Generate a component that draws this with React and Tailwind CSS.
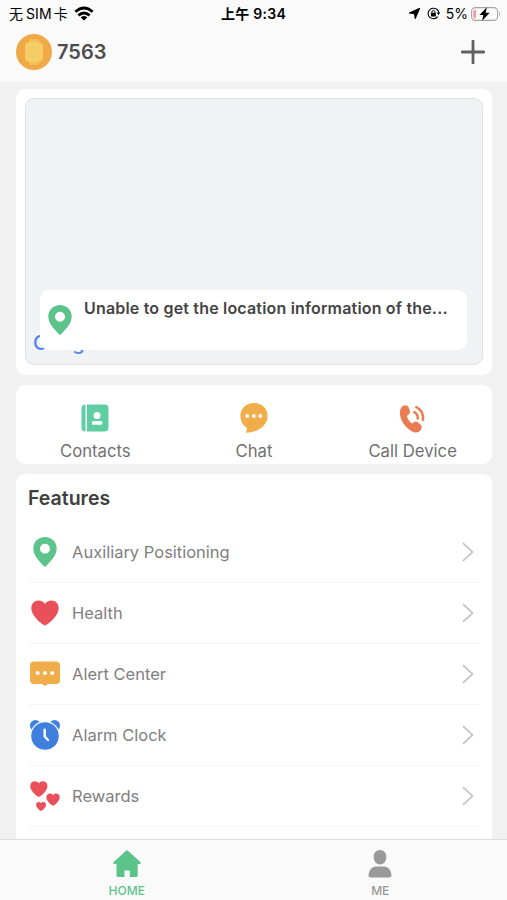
import { useState } from 'react'

function PinIcon({ className }) {
  return (
    <svg viewBox="0 0 24 30" className={className}>
      <path
        fillRule="evenodd"
        fill="#5cc48a"
        d="M12 0C5.4 0 .3 5 .3 11.500C.3 18.500 6 23.800 10.700 29.100Q12 30.500 13.300 29.100C18 23.800 23.700 18.500 23.700 11.500C23.700 5 18.600 0 12 0ZM12 6.800a5 5 0 1 1 0 10a5 5 0 0 1 0-10Z"
      />
    </svg>
  )
}

const HEART = 'M14 25.500C11 24.500 .3 16 .3 8C.3 3.500 3.600.5 7.500.5C10.400.5 12.800 1.900 14 3.900C15.200 1.900 17.600.5 20.500.5C24.400.5 27.700 3.500 27.700 8C27.700 16 17 24.500 14 25.500Z'

function HeartIcon() {
  return (
    <svg viewBox="0 0 28 26" className="w-7 h-[26px]">
      <path d={HEART} fill="#e9505a" />
    </svg>
  )
}

function AlertIcon() {
  return (
    <svg viewBox="0 0 30 26" className="w-[30px] h-[26px]">
      <path d="M4 .5H26Q30 .5 30 4.500V19Q30 23 26 23H18L16 24.500Q15 25 14 24.500L12 23H4Q0 23 0 19V4.500Q0 .5 4 .5Z" fill="#f0ad4a" />
      <circle cx="7.700" cy="12" r="2.100" fill="#fff" />
      <circle cx="15" cy="12" r="2.100" fill="#fff" />
      <circle cx="22.300" cy="12" r="2.100" fill="#fff" />
    </svg>
  )
}

function AlarmIcon() {
  return (
    <svg viewBox="0 0 30 30" className="w-[30px] h-[30px]">
      <circle cx="5.500" cy="5.500" r="5.500" fill="#3f80df" />
      <circle cx="24.500" cy="5.500" r="5.500" fill="#3f80df" />
      <circle cx="15" cy="16" r="15" fill="#fff" />
      <circle cx="15" cy="16" r="13.800" fill="#3f80df" />
      <path d="M14.700 9.800V16.500L18 20" fill="none" stroke="#fff" strokeWidth="2.400" strokeLinecap="round" strokeLinejoin="round" />
    </svg>
  )
}

function RewardsIcon() {
  return (
    <svg viewBox="0 0 30 30" className="w-[30px] h-[30px]" fill="#e9505a">
      <path d={HEART} transform="translate(0 0) scale(.63)" />
      <path d={HEART} transform="translate(16.200 12.300) scale(.49)" />
      <path d={HEART} transform="translate(6 20.800) scale(.36)" />
    </svg>
  )
}

function ContactsIcon() {
  return (
    <svg viewBox="0 0 28 28" className="w-7 h-7">
      <path d="M4.500.5V27.500Q.5 27.500 .5 23.500V4.500Q.5.5 4.500.5Z" fill="#5fcfa3" />
      <path d="M6 .5H23.500Q27.500.5 27.500 4.500V23.500Q27.500 27.500 23.500 27.500H6Z" fill="#5fcfa3" />
      <circle cx="16" cy="11.600" r="3.500" fill="#fff" />
      <rect x="10.800" y="17" width="10.700" height="3.800" rx="1.900" fill="#fff" />
    </svg>
  )
}

function ChatIcon() {
  return (
    <svg viewBox="0 0 28 30" className="w-7 h-[30px]">
      <path d="M14 0C6 0 .4 5.500.4 13C.4 18.500 3 22.500 7 24.800L6 29.800C15 30 27.600 24 27.600 13C27.600 5.500 22 0 14 0Z" fill="#f0ad4a" />
      <circle cx="7.200" cy="13" r="2" fill="#fff" />
      <circle cx="13.700" cy="13" r="2" fill="#fff" />
      <circle cx="20.200" cy="13" r="2" fill="#fff" />
    </svg>
  )
}

function CallIcon() {
  return (
    <svg viewBox="0 0 28 30" className="w-7 h-[30px]">
      <path
        d="M3.800 3Q7.500.8 9.700 4.300L10.900 8Q11.300 10.400 9.300 11.800Q7.500 13 8.200 14.200C9.300 17 10.800 18.900 12.600 20.300Q13.600 20.800 14.700 19.300Q16.300 17.800 18.300 19L21.600 21.600Q23.600 24 21.800 27Q18.800 30.800 14.300 29C6.500 25.500 1.300 17.500 .8 10Q1 5 3.800 3Z"
        fill="#ea7b52"
      />
      <path d="M15.300 9.200Q19.200 11.300 18.700 15.600M17.300 4Q25 8.200 24 17" fill="none" stroke="#ea7b52" strokeWidth="2.500" strokeLinecap="round" />
    </svg>
  )
}

function StatusBar() {
  return (
    <div className="flex h-[27px] items-center justify-between pl-[9px] pr-[6px] text-black">
      <div className="flex w-[180px] items-center text-[14px] whitespace-nowrap">
        <span>无</span>
        <span className="ml-[3px] tracking-[0.1px]">SIM</span>
        <span className="ml-[2px]">卡</span>
        <svg viewBox="0 0 20 15" className="ml-[6px] w-5 h-[15px]" fill="none" stroke="#000" strokeWidth="2.900">
          <path d="M1.400 5.800Q10-2 18.600 5.800" />
          <path d="M4.400 9.300Q10 4.500 15.600 9.300" />
          <path d="M10 14.500L6.700 11.400Q10 8.800 13.300 11.400Z" fill="#000" stroke="none" />
        </svg>
      </div>
      <span className="mr-[3px] text-[14px] font-semibold whitespace-nowrap tracking-[0.25px]">上午 9:34</span>
      <div className="flex w-[180px] items-center justify-end text-[14px]">
        <svg viewBox="0 0 12 12" className="mr-[7px] w-[11px] h-[11px]">
          <path d="M11.600.3L6.800 11.500L6 6.200L.4 5.500Z" fill="#000" stroke="#000" strokeWidth="1.100" strokeLinejoin="round" />
        </svg>
        <svg viewBox="0 0 14 14" className="mr-[6px] w-[13px] h-[13px]">
          <path d="M11.500 3.700A5.700 5.700 0 1 0 11.500 10.300M12.700 7.500A5.700 5.700 0 0 0 9 1.600" fill="none" stroke="#000" strokeWidth="1.200" />
          <path d="M10.400 6H14L12.300 9Z" />
          <rect x="4.300" y="6.200" width="5.200" height="4" rx=".6" />
          <path d="M5.300 6.500V5.300a1.600 1.600 0 0 1 3.200 0V6.500" fill="none" stroke="#000" />
        </svg>
        <span>5%</span>
        <svg viewBox="0 0 30 14" className="ml-[3px] w-[30px] h-[14px]">
          <rect x=".6" y=".6" width="26" height="12.800" rx="3.800" fill="none" stroke="#a5a5a5" strokeWidth="1.100" />
          <path d="M28 4.800Q30 7 28 9.200Z" fill="#a5a5a5" />
          <path d="M5 2.500V11.500Q2.200 11.500 2.200 9V5Q2.200 2.500 5 2.500Z" fill="#f39aa4" />
          <path d="M15.800.3L8.500 8H12.300L11.200 13.700L18.700 5.800H14.700Z" fill="#000" />
        </svg>
      </div>
    </div>
  )
}

const actions = [
  { label: 'Contacts', Icon: ContactsIcon },
  { label: 'Chat', Icon: ChatIcon },
  { label: 'Call Device', Icon: CallIcon },
]

const features = [
  { label: 'Auxiliary Positioning', icon: <PinIcon className="w-6 h-[30px]" /> },
  { label: 'Health', icon: <HeartIcon /> },
  { label: 'Alert Center', icon: <AlertIcon /> },
  { label: 'Alarm Clock', icon: <AlarmIcon /> },
  { label: 'Rewards', icon: <RewardsIcon /> },
]

function FeatureRow({ label, icon }) {
  return (
    <button className="flex h-[61px] w-full shrink-0 items-center border-b border-[#f5f5f5] pr-[6px] text-left">
      <span className="flex w-[34px] justify-center">{icon}</span>
      <span className="ml-[10px] flex-1 text-[16.5px] text-[#808080]">{label}</span>
      <svg viewBox="0 0 12 20" className="w-3 h-5">
        <path d="M1 1.200L10.500 10L1 18.800" fill="none" stroke="#c2c2c2" strokeWidth="1.700" />
      </svg>
    </button>
  )
}

export default function App() {
  const [tab, setTab] = useState('home')

  return (
    <div className="flex h-[900px] w-[507px] flex-col overflow-hidden bg-[#f1f1f1] font-['Inter','Noto_Sans_CJK_SC',sans-serif]">
      <header className="h-[82px] shrink-0 bg-[#fafafa]">
        <StatusBar />
        <div className="flex h-[50px] items-center pl-4 pr-[22px]">
          <svg viewBox="0 0 36 36" className="w-9 h-9">
            <circle cx="18" cy="18" r="18" fill="#f0a947" />
            <path d="M14 5H22L24 9H12ZM12 27H24L22 31H14Z" fill="#f3c05a" />
            <rect x="9" y="8.500" width="18" height="19" rx="4" fill="#f5cc66" />
          </svg>
          <span className="ml-[5px] flex-1 text-[20px] font-semibold text-[#4c4c4c]">7563</span>
          <svg viewBox="0 0 24 24" className="w-6 h-6">
            <path d="M12 1.200V22.800M1.200 12H22.800" stroke="#606060" strokeWidth="2.800" strokeLinecap="round" />
          </svg>
        </div>
      </header>

      <main className="flex min-h-0 flex-1 flex-col gap-[10px] overflow-hidden pt-[7px] pl-4 pr-[15px]">
        {/* Map */}
        <section className="h-[286px] shrink-0 rounded-[9px] bg-white p-[9px]">
          <div className="relative h-[267px] rounded-[9px] border-[1.5px] border-[#dfe1e2] bg-[#f0f2f4]">
            <div className="absolute left-[7px] top-[230px] text-[20px] leading-[28px] font-medium">
              <span className="text-[#4d84ec]">G</span>
              <span className="text-[#f0f2f4]">oo</span>
              <span className="text-[#4d84ec]">g</span>
              <span className="text-[#f0f2f4]">le</span>
            </div>
            <div className="absolute left-[14px] top-[191px] flex h-[60px] w-[427px] rounded-[9px] bg-white pl-2">
              <PinIcon className="mt-[15px] w-6 h-[30px]" />
              <p className="ml-3 mt-[6px] text-[16px] leading-6 font-semibold tracking-[0.18px] whitespace-nowrap text-[#444]">
                Unable to get the location information of the...
              </p>
            </div>
          </div>
        </section>

        {/* Quick actions */}
        <section className="grid h-[79px] shrink-0 grid-cols-3 rounded-[9px] bg-white">
          {actions.map(({ label, Icon }) => (
            <button key={label} className="flex flex-col items-center pt-[17px]">
              <span className="flex h-[31px] items-center"><Icon /></span>
              <span className="mt-[6px] text-[16.7px] leading-6 text-[#707070]">{label}</span>
            </button>
          ))}
        </section>

        {/* Features */}
        <section className="flex min-h-0 flex-1 flex-col overflow-hidden rounded-t-[9px] bg-white px-3">
          <h2 className="h-[48px] shrink-0 text-[19.5px] leading-[49px] font-semibold text-[#404040]">Features</h2>
          {features.map(f => <FeatureRow key={f.label} {...f} />)}
        </section>
      </main>

      {/* Tab bar */}
      <nav className="grid h-[61px] shrink-0 grid-cols-2 border-t-[1.5px] border-[#dedede] bg-[#fafafa] text-[12px] font-medium">
        <button onClick={() => setTab('home')} className="flex flex-col items-center pt-[10px]">
          <svg viewBox="0 0 28 28" className={`w-7 h-7 ${tab === 'home' ? 'text-[#5cc48a]' : 'text-[#999]'}`}>
            <path d="M13 .7Q14 0 15 .7L27.300 12Q28.500 13.800 27 14H24.700V25.500Q24.700 27 23.200 27H16.800V20.500H11.500V27H5Q3.500 27 3.500 25.500V14H1Q-.5 13.800.7 12Z" fill="currentColor" />
          </svg>
          <span className={`mt-[5px] leading-4 ${tab === 'home' ? 'text-[#5cc48a]' : 'text-[#999]'}`}>HOME</span>
        </button>
        <button onClick={() => setTab('me')} className="flex flex-col items-center pt-[10px]">
          <svg viewBox="0 0 24 28" className={`w-6 h-7 ${tab === 'me' ? 'text-[#5cc48a]' : 'text-[#999]'}`}>
            <path d="M12 0C16 0 18.300 3 18.300 7C18.300 11.500 15.500 14.500 12 14.500S5.700 11.500 5.700 7C5.700 3 8 0 12 0ZM7 16.500H17Q23.500 18.500 23.500 25.500Q23.500 27.500 21.500 27.500H2.500Q.5 27.500.5 25.500Q.5 18.500 7 16.500Z" fill="currentColor" />
          </svg>
          <span className={`mt-[5px] leading-4 ${tab === 'me' ? 'text-[#5cc48a]' : 'text-[#999]'}`}>ME</span>
        </button>
      </nav>
    </div>
  )
}
